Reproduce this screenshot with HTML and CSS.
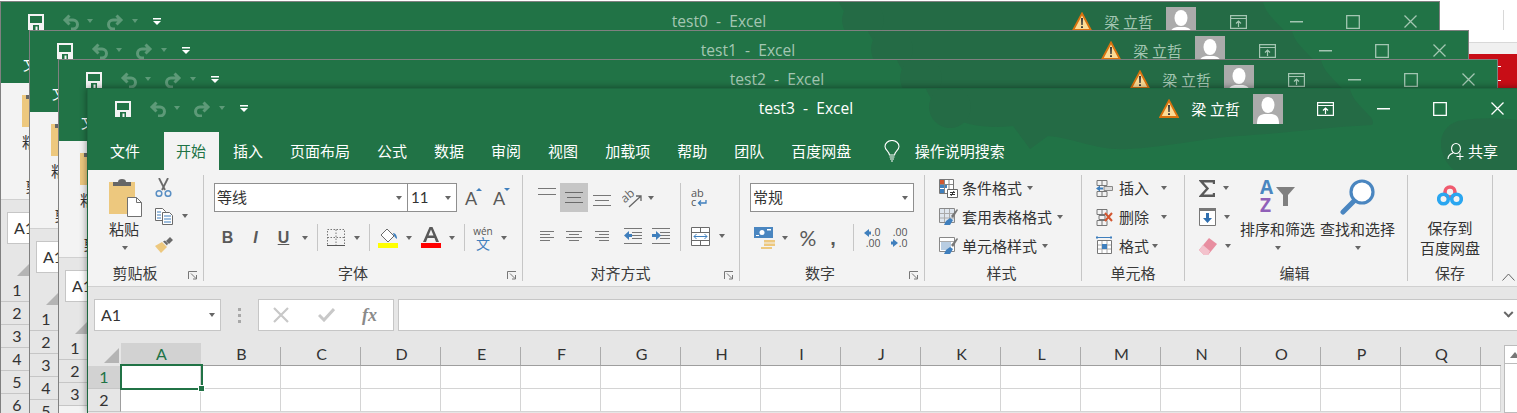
FILE: index.html
```html
<!DOCTYPE html>
<html lang="zh-CN">
<head>
<meta charset="utf-8">
<title>Excel</title>
<link rel="stylesheet" href="styles.css">
</head>
<body>
<svg class="defs" aria-hidden="true">
  <symbol id="cloud" viewBox="0 0 1438 81" preserveAspectRatio="none">
    <path d="M838 0L1262 0C1266 18 1290 28 1284 36C1240 38 1200 44 1150 47C1110 50 1080 58 1040 60C1010 62 990 50 960 47L942 60L925 37C880 42 850 28 838 0Z"/>
    <path d="M1366 81C1350 68 1346 40 1370 32C1400 27 1420 30 1438 32L1438 81Z"/>
    <circle cx="862" cy="18" r="21"/>
  </symbol>
  <symbol id="save" viewBox="0 0 16 16"><path fill="#f4f4f4" d="M0 0h16v16H0z"/><path fill="#217346" d="M2 2h12v7H2zM5 11h6v5H9.5v-3.5h-2V16H5z"/></symbol>
  <symbol id="undo" viewBox="0 0 18 16"><path fill="none" stroke="currentColor" stroke-width="3" d="M3 6h8a4.500 4.500 0 0 1 0 9H9M7.500 1.500L3 6l4.500 4.500"/></symbol>
  <symbol id="custom" viewBox="0 0 8 7"><path fill="#fff" d="M0 0h8v1.500H0zM0 3h8L4 7z"/></symbol>
  <symbol id="warn" viewBox="0 0 20 19"><path fill="#fbdc96" stroke="#d9730f" stroke-width="1.800" d="M10 1.500L18.800 18H1.200z"/><path fill="#3a3a3a" d="M9 6h2l-.3 7H9.300zM9 14.200h2V16H9z"/></symbol>
  <symbol id="avatar" viewBox="0 0 30 30"><path fill="#ababab" d="M0 0h30v30H0z"/><ellipse cx="15" cy="11" rx="6.500" ry="8" fill="#fff"/><path fill="#fff" d="M4 30c0-7 2-9 7-10h8c5 1 7 3 7 10z"/></symbol>
  <symbol id="display" viewBox="0 0 17 14"><path fill="none" stroke="currentColor" stroke-width="1.200" d="M.6.600h15.800v12.800H.6zM1 3.500h15M8.500 12V6M6 8.500l2.500-2.500L11 8.500"/></symbol>
  <symbol id="min" viewBox="0 0 13 2"><path fill="currentColor" d="M0 0h13v1.500H0z"/></symbol>
  <symbol id="max" viewBox="0 0 14 14"><path fill="none" stroke="currentColor" stroke-width="1.300" d="M.7.700h12.600v12.600H.7z"/></symbol>
  <symbol id="close" viewBox="0 0 13 13"><path fill="none" stroke="currentColor" stroke-width="1.300" d="M.5.500l12 12M12.500.500l-12 12"/></symbol>
  <symbol id="bulb" viewBox="0 0 16 22"><path fill="none" stroke="#fff" stroke-width="1.100" d="M5.500 15C5 11 1 10 1 6.500a7 6 0 0 1 14 0C15 10 11 11 10.500 15zM5.500 17h5M6 19h4M7 21h2"/></symbol>
  <symbol id="share" viewBox="0 0 18 18"><path fill="none" stroke="#fff" stroke-width="1.100" d="M9 1.500a4 4.500 0 0 1 0 10a4 4.500 0 0 1 0-10zM1 17c0-3 2-5 5-6M13 11v7M9.500 14.500h7"/></symbol>
  <symbol id="paste" viewBox="0 0 34 38"><path fill="#edc87e" d="M1 3h26v32H1z"/><path fill="#666" d="M5 3h5a4 3 0 0 1 8 0h5v4H5z"/><path fill="#fff" stroke="#707070" d="M19.500 18.500h9l5 5v14h-14z"/><path fill="none" stroke="#707070" d="M28.500 18.500v5h5"/></symbol>
  <symbol id="cut" viewBox="0 0 17 19"><path fill="none" stroke="#6a6a6a" stroke-width="1.800" d="M4 0l6 12M13 0L7 12"/><circle cx="4" cy="15.500" r="2.800" fill="none" stroke="#5a8fc3" stroke-width="1.500"/><circle cx="13" cy="15.500" r="2.800" fill="none" stroke="#5a8fc3" stroke-width="1.500"/></symbol>
  <symbol id="copy" viewBox="0 0 18 17"><path fill="#fff" stroke="#6a6a6a" d="M.5.500h7l3 3v9H.5z"/><path fill="#fff" stroke="#6a6a6a" d="M7.500 4.500h7l3 3v9h-10z"/><path stroke="#3f7fbd" d="M2 4h4M2 7h4M2 10h4M9 8h7M9 11h7M9 14h7"/></symbol>
  <symbol id="painter" viewBox="0 0 18 16"><path fill="#edc87e" d="M0 9l7-4 5 5-6 6z"/><path fill="#6a6a6a" d="M8 4.500l2-1 3 3-1 2zM11 4l4-4 3 3-4 4z"/></symbol>
  <symbol id="borders" viewBox="0 0 18 17"><path fill="none" stroke="#777" stroke-dasharray="1.500 1.500" d="M.5.500h17v16H.5zM.5 8.500h17M9 .500v16"/><path stroke="#555" d="M0 16.500h18"/></symbol>
  <symbol id="bucket" viewBox="0 0 20 20"><path fill="#fff" stroke="#6a6a6a" d="M9 1l7 7-6 6-7-7z"/><path fill="#3f7fbd" d="M15 5c2 0 4 2 4 6-2-1-3-3-4-6z"/><path fill="#ff0" d="M0 15h20v5H0z"/></symbol>
  <symbol id="fontcolor" viewBox="0 0 20 22"><path fill="#595959" d="M8.500 0h3L18 15h-3l-1.500-4h-7L5 15H2zM7.500 8.500h5L10 2.500z"/><path fill="#f00" d="M0 16h20v5H0z"/></symbol>
  <symbol id="atop" viewBox="0 0 18 8"><path stroke="#777" d="M0 .500h18M0 6.500h18"/></symbol>
  <symbol id="amid" viewBox="0 0 18 11"><path stroke="#6a6a6a" d="M0 .500h18M2 5.500h14M0 10.500h18"/></symbol>
  <symbol id="abot" viewBox="0 0 18 12"><path stroke="#777" d="M0 .500h18M2 5.500h14M0 10.500h18"/></symbol>
  <symbol id="aleft" viewBox="0 0 14 11"><path stroke="#777" d="M0 .500h14M0 3.500h10M0 6.500h14M0 9.500h10"/></symbol>
  <symbol id="acenter" viewBox="0 0 16 11"><path stroke="#777" d="M0 .500h16M3 3.500h10M0 6.500h16M3 9.500h10"/></symbol>
  <symbol id="aright" viewBox="0 0 14 11"><path stroke="#777" d="M0 .500h14M4 3.500h10M0 6.500h14M4 9.500h10"/></symbol>
  <symbol id="indl" viewBox="0 0 18 16"><path stroke="#777" d="M0 .500h18M8 4.500h10M8 7.500h10M8 10.500h10M0 15.500h18"/><path fill="#3f7fbd" d="M0 7.500L5 3v3h3v3H5v3z"/></symbol>
  <symbol id="indr" viewBox="0 0 18 16"><path stroke="#777" d="M0 .500h18M8 4.500h10M8 7.500h10M8 10.500h10M0 15.500h18"/><path fill="#3f7fbd" d="M9 7.500L4 3v3H0v3h4v3z"/></symbol>
  <symbol id="merge" viewBox="0 0 19 19"><path fill="#fff" stroke="#6a6a6a" d="M.5.500h18v18H.5zM.5 5.500h18M.5 13.500h18M9.500.500v5M9.500 13.500v5"/><path fill="none" stroke="#3f7fbd" d="M3 9.500h13M5.500 7L3 9.500 5.500 12M13.500 7l2.500 2.500-2.500 2.500"/></symbol>
  <symbol id="acct" viewBox="0 0 21 22"><path fill="#4a86c0" d="M0 0h19v11H0z"/><circle cx="8" cy="5.500" r="2.500" fill="#fff"/><path fill="#fff" d="M13 2h4v1.500h-4zM2 8h3v1H2z"/><path fill="#edc87e" d="M10 13h11v2.500H10zM10 16.500h11V19H10zM7 20h11v2H7z"/></symbol>
  <symbol id="decl" viewBox="0 0 16 18"><path fill="#3f7fbd" d="M0 4l5-4v2.500h2v3H5V8z"/></symbol>
  <symbol id="decr" viewBox="0 0 16 18"><path fill="#3f7fbd" d="M7 14l-5-4v2.500H0v3h2V18z"/></symbol>
  <symbol id="cond" viewBox="0 0 19 19"><path fill="#fff" stroke="#777" d="M.5.500h14v14H.5z"/><path fill="#d2562f" d="M1 1h4v4H1z"/><path fill="#3f7fbd" d="M1 6h7v3H1zM1 10h4v4H1z"/><path stroke="#888" d="M5.500 1v13M10 1v13M1 5.500h13"/><path fill="#fff" stroke="#666" d="M8.500 10.500h10v8h-10z"/><path stroke="#333" d="M11 13.500h5M11 15.500h5M12 17l3-5"/></symbol>
  <symbol id="tablef" viewBox="0 0 19 19"><path fill="#dfe6ee" stroke="#888" d="M.5.500h15v14H.5z"/><path stroke="#aaa" d="M5.500 1v13M10.500 1v13M1 5.500h14M1 10h14"/><path fill="#777" d="M12 8l6-7 1 1-5 8z"/><path fill="#3f7fbd" d="M7 13l4-3 3 2-3 5H5z"/></symbol>
  <symbol id="cellf" viewBox="0 0 19 19"><path fill="#fff" stroke="#888" d="M.5.500h15v14H.5z"/><path fill="#b8cde2" d="M2 5h10v8H2z"/><path stroke="#aaa" d="M1 4.500h14"/><path fill="#777" d="M12 8l6-7 1 1-5 8z"/><path fill="#3f7fbd" d="M7 13l4-3 3 2-3 5H5z"/></symbol>
  <symbol id="cins" viewBox="0 0 17 17"><path fill="none" stroke="#777" d="M1 .500h10v5H1zM1 11.500h10v5H1zM6 .500v5M6 11.500v5"/><path fill="#dcdcdc" stroke="#888" d="M8 6.500h8.500v4H8z"/><path fill="#3f7fbd" d="M0 8.500L4 5.500v2h3v2H4v2z"/></symbol>
  <symbol id="cdel" viewBox="0 0 17 17"><path fill="none" stroke="#777" d="M1 .500h10v5H1zM1 11.500h10v5H1zM6 .500v5M6 11.500v5M3 6.500h6v4H3z"/><path fill="none" stroke="#d2562f" stroke-width="2" d="M9 4l7 8M16 4l-7 8"/></symbol>
  <symbol id="cfmt" viewBox="0 0 17 20"><path fill="none" stroke="#3f7fbd" d="M0 1.500h16M1 0v3M15 0v3"/><path fill="#fff" stroke="#777" d="M1.500 4.500h14v13h-14z"/><path stroke="#aaa" d="M6 5v12M11 5v12M2 9h13M2 13h13"/><path fill="#3f7fbd" d="M6 8h5v5H6z"/></symbol>
  <symbol id="sigma" viewBox="0 0 16 17"><path fill="none" stroke="#595959" stroke-width="2.400" d="M15 4V1.200H2L8.500 8.500 2 15.800h13V13"/></symbol>
  <symbol id="fill" viewBox="0 0 17 18"><path fill="#fff" stroke="#777" d="M.5.500h16v17H.5z"/><path fill="#777" d="M0 0h17v3H0z"/><path fill="#2f6fb0" d="M7 5h3v5h3l-4.500 5L4 10h3z"/></symbol>
  <symbol id="eraser" viewBox="0 0 18 17"><path fill="#e88ea0" d="M10 0l8 6-9 11H5L0 12z"/><path fill="#f3c2cc" d="M0 12l4-5 7 6-2 4H5z"/></symbol>
  <symbol id="find" viewBox="0 0 36 38"><circle cx="22" cy="13" r="11" fill="#fff" stroke="#4a86c0" stroke-width="3.200"/><path stroke="#4a86c0" stroke-width="5" stroke-linecap="round" d="M14 22L3 33"/></symbol>
  <symbol id="baidu" viewBox="0 0 26 22"><circle cx="13" cy="7" r="5" fill="none" stroke="#f05a6e" stroke-width="3.600"/><circle cx="6.500" cy="14" r="4.800" fill="none" stroke="#2aa6f0" stroke-width="3.600"/><circle cx="19.500" cy="14" r="4.800" fill="none" stroke="#2aa6f0" stroke-width="3.600"/></symbol>
  <symbol id="launch" viewBox="0 0 10 9"><path fill="none" stroke="#777" d="M.5 8V.500H9M3 2.500l5 5M8.500 4v4H5"/></symbol>
  <symbol id="collapse" viewBox="0 0 13 8"><path fill="none" stroke="#666" d="M.5 7.500L6.500 1l6 6.500"/></symbol>
  <symbol id="fxx" viewBox="0 0 16 16"><path fill="none" stroke="#c8c8c8" stroke-width="2.200" d="M1 1l14 14M15 1L1 15"/></symbol>
  <symbol id="fxok" viewBox="0 0 17 14"><path fill="none" stroke="#c8c8c8" stroke-width="3" d="M1 7l5 5L16 1"/></symbol>
</svg>

<div class="desk-line"></div>
<div class="desk-strip"></div>
<div class="desk-red"><i></i><i></i></div>

<section class="win w0 back">
  <header class="head">
    <svg class="cloud"><use href="#cloud"/></svg>
    <div class="titlebar">
      <div class="qat"><svg width="16" height="16"><use href="#save"/></svg><svg class="dim" width="18" height="16"><use href="#undo"/></svg><span class="caret dimc"></span><svg class="dim flip" width="18" height="16"><use href="#undo"/></svg><span class="caret dimc"></span><svg width="8" height="7"><use href="#custom"/></svg></div>
      <div class="title">test0&nbsp; -&nbsp; Excel</div>
      <div class="ctrls"><svg width="20" height="19"><use href="#warn"/></svg><span class="user">梁 立哲</span><svg class="av" width="30" height="30"><use href="#avatar"/></svg><svg class="c-disp" width="17" height="14"><use href="#display"/></svg><svg class="c-min" width="13" height="2"><use href="#min"/></svg><svg class="c-max" width="14" height="14"><use href="#max"/></svg><svg class="c-close" width="13" height="13"><use href="#close"/></svg></div>
    </div>
    <nav class="tabs"><span class="tab">文件</span></nav>
  </header>
  <div class="ribbon"><div class="group g-clip"><div class="big paste-col"><svg width="34" height="38"><use href="#paste"/></svg><span class="big-t">粘贴</span><span class="caret"></span></div><div class="group-label">剪贴板</div></div></div>
  <div class="fbar"><div class="namebox"><span>A1</span></div></div>
  <div class="rows"><div class="corner"></div><div class="rh">1</div><div class="rh">2</div><div class="rh">3</div><div class="rh">4</div><div class="rh">5</div><div class="rh">6</div></div>
</section>

<section class="win w1 back">
  <header class="head">
    <svg class="cloud"><use href="#cloud"/></svg>
    <div class="titlebar">
      <div class="qat"><svg width="16" height="16"><use href="#save"/></svg><svg class="dim" width="18" height="16"><use href="#undo"/></svg><span class="caret dimc"></span><svg class="dim flip" width="18" height="16"><use href="#undo"/></svg><span class="caret dimc"></span><svg width="8" height="7"><use href="#custom"/></svg></div>
      <div class="title">test1&nbsp; -&nbsp; Excel</div>
      <div class="ctrls"><svg width="20" height="19"><use href="#warn"/></svg><span class="user">梁 立哲</span><svg class="av" width="30" height="30"><use href="#avatar"/></svg><svg class="c-disp" width="17" height="14"><use href="#display"/></svg><svg class="c-min" width="13" height="2"><use href="#min"/></svg><svg class="c-max" width="14" height="14"><use href="#max"/></svg><svg class="c-close" width="13" height="13"><use href="#close"/></svg></div>
    </div>
    <nav class="tabs"><span class="tab">文件</span></nav>
  </header>
  <div class="ribbon"><div class="group g-clip"><div class="big paste-col"><svg width="34" height="38"><use href="#paste"/></svg><span class="big-t">粘贴</span><span class="caret"></span></div><div class="group-label">剪贴板</div></div></div>
  <div class="fbar"><div class="namebox"><span>A1</span></div></div>
  <div class="rows"><div class="corner"></div><div class="rh">1</div><div class="rh">2</div><div class="rh">3</div><div class="rh">4</div><div class="rh">5</div></div>
</section>

<section class="win w2 back">
  <header class="head">
    <svg class="cloud"><use href="#cloud"/></svg>
    <div class="titlebar">
      <div class="qat"><svg width="16" height="16"><use href="#save"/></svg><svg class="dim" width="18" height="16"><use href="#undo"/></svg><span class="caret dimc"></span><svg class="dim flip" width="18" height="16"><use href="#undo"/></svg><span class="caret dimc"></span><svg width="8" height="7"><use href="#custom"/></svg></div>
      <div class="title">test2&nbsp; -&nbsp; Excel</div>
      <div class="ctrls"><svg width="20" height="19"><use href="#warn"/></svg><span class="user">梁 立哲</span><svg class="av" width="30" height="30"><use href="#avatar"/></svg><svg class="c-disp" width="17" height="14"><use href="#display"/></svg><svg class="c-min" width="13" height="2"><use href="#min"/></svg><svg class="c-max" width="14" height="14"><use href="#max"/></svg><svg class="c-close" width="13" height="13"><use href="#close"/></svg></div>
    </div>
    <nav class="tabs"><span class="tab">文件</span></nav>
  </header>
  <div class="ribbon"><div class="group g-clip"><div class="big paste-col"><svg width="34" height="38"><use href="#paste"/></svg><span class="big-t">粘贴</span><span class="caret"></span></div><div class="group-label">剪贴板</div></div></div>
  <div class="fbar"><div class="namebox"><span>A1</span></div></div>
  <div class="rows"><div class="corner"></div><div class="rh">1</div><div class="rh">2</div><div class="rh">3</div></div>
</section>

<section class="win w3">
  <header class="head">
    <svg class="cloud"><use href="#cloud"/></svg>
    <div class="titlebar">
      <div class="qat"><svg width="16" height="16"><use href="#save"/></svg><svg class="dim" width="18" height="16"><use href="#undo"/></svg><span class="caret dimc"></span><svg class="dim flip" width="18" height="16"><use href="#undo"/></svg><span class="caret dimc"></span><svg width="8" height="7"><use href="#custom"/></svg></div>
      <div class="title">test3&nbsp; -&nbsp; Excel</div>
      <div class="ctrls"><svg width="20" height="19"><use href="#warn"/></svg><span class="user">梁 立哲</span><svg class="av" width="30" height="30"><use href="#avatar"/></svg><svg class="c-disp" width="17" height="14"><use href="#display"/></svg><svg class="c-min" width="13" height="2"><use href="#min"/></svg><svg class="c-max" width="14" height="14"><use href="#max"/></svg><svg class="c-close" width="13" height="13"><use href="#close"/></svg></div>
    </div>
    <nav class="tabs">
      <span class="tab">文件</span><span class="tab on">开始</span><span class="tab">插入</span><span class="tab">页面布局</span><span class="tab">公式</span><span class="tab">数据</span><span class="tab">审阅</span><span class="tab">视图</span><span class="tab">加载项</span><span class="tab">帮助</span><span class="tab">团队</span><span class="tab">百度网盘</span>
      <span class="search"><svg width="16" height="22"><use href="#bulb"/></svg><span>操作说明搜索</span></span>
      <span class="sharebtn"><svg width="18" height="18"><use href="#share"/></svg><span>共享</span></span>
    </nav>
  </header>

  <div class="ribbon">
    <div class="group g-clip">
      <div class="body clip-body">
        <div class="big paste-col"><svg width="34" height="38"><use href="#paste"/></svg><span class="big-t">粘贴</span><span class="caret"></span></div>
        <div class="clip-side">
          <svg width="17" height="19"><use href="#cut"/></svg>
          <div class="copy-row"><svg width="18" height="17"><use href="#copy"/></svg><span class="caret"></span></div>
          <svg width="18" height="16"><use href="#painter"/></svg>
        </div>
      </div>
      <div class="group-label">剪贴板</div>
      <svg class="launch" width="10" height="9"><use href="#launch"/></svg>
    </div>

    <div class="group g-font">
      <div class="body">
        <div class="font-r1">
          <div class="combo fontname"><span>等线</span><span class="caret"></span></div>
          <div class="combo fontsize"><span>11</span><span class="caret"></span></div>
          <span class="growa up">A</span><span class="growa down">A</span>
        </div>
        <div class="font-r2">
          <b class="fb">B</b><i class="fi">I</i><u class="fu">U</u><span class="caret"></span><span class="vsep"></span>
          <svg width="18" height="17"><use href="#borders"/></svg><span class="caret"></span><span class="vsep"></span>
          <svg width="20" height="20"><use href="#bucket"/></svg><span class="caret"></span>
          <svg width="20" height="22"><use href="#fontcolor"/></svg><span class="caret"></span><span class="vsep"></span>
          <span class="wen"><span>wén</span><span class="wenz">文</span></span><span class="caret"></span>
        </div>
      </div>
      <div class="group-label">字体</div>
      <svg class="launch" width="10" height="9"><use href="#launch"/></svg>
    </div>

    <div class="group g-align">
      <div class="body align-body">
        <div class="al-main">
          <div class="al-r1">
            <svg class="atop" width="18" height="8"><use href="#atop"/></svg>
            <span class="sel"><svg width="18" height="11"><use href="#amid"/></svg></span>
            <svg class="abot" width="18" height="12"><use href="#abot"/></svg>
            <svg width="20" height="20" viewBox="0 0 20 20"><text x="0" y="12" transform="rotate(-40 6 10)" class="svgt" fill="#666">ab</text><path fill="none" stroke="#666" stroke-width="1.300" d="M7 19L19 8M14 8h5v5"/></svg>
            <span class="caret"></span>
          </div>
          <div class="al-r2">
            <svg width="14" height="11"><use href="#aleft"/></svg>
            <svg width="16" height="11"><use href="#acenter"/></svg>
            <svg width="14" height="11"><use href="#aright"/></svg>
            <svg width="18" height="16"><use href="#indl"/></svg>
            <svg width="18" height="16"><use href="#indr"/></svg>
          </div>
        </div>
        <span class="al-sep"></span>
        <div class="al-side">
          <svg class="wrap" width="16" height="18" viewBox="0 0 16 18"><text x="0" y="8" class="svgw" fill="#555">ab</text><text x="0" y="17" class="svgw" fill="#555">c</text><path fill="none" stroke="#3f7fbd" stroke-width="1.300" d="M15 11v3H8M10 11.500L7.500 14l2.500 2.500"/></svg>
          <svg class="merge" width="19" height="19"><use href="#merge"/></svg><span class="caret"></span>
        </div>
      </div>
      <div class="group-label">对齐方式</div>
      <svg class="launch" width="10" height="9"><use href="#launch"/></svg>
    </div>

    <div class="group g-num">
      <div class="body num-body">
        <div class="combo numfmt"><span>常规</span><span class="caret"></span></div>
        <div class="num-r2">
          <svg width="21" height="22"><use href="#acct"/></svg><span class="caret"></span>
          <span class="pct">%</span><span class="comma">,</span><span class="vsep"></span>
          <span class="dec"><svg width="16" height="18"><use href="#decl"/></svg><span class="d1">.0</span><span class="d2">.00</span></span>
          <span class="dec"><svg width="16" height="18"><use href="#decr"/></svg><span class="d1">.00</span><span class="d2">.0</span></span>
        </div>
      </div>
      <div class="group-label">数字</div>
      <svg class="launch" width="10" height="9"><use href="#launch"/></svg>
    </div>

    <div class="group g-styles">
      <div class="body stack">
        <div class="row"><svg width="19" height="19"><use href="#cond"/></svg><span>条件格式</span><span class="caret"></span></div>
        <div class="row"><svg width="19" height="19"><use href="#tablef"/></svg><span>套用表格格式</span><span class="caret"></span></div>
        <div class="row"><svg width="19" height="19"><use href="#cellf"/></svg><span>单元格样式</span><span class="caret"></span></div>
      </div>
      <div class="group-label">样式</div>
    </div>

    <div class="group g-cells">
      <div class="body stack">
        <div class="row"><svg width="17" height="17"><use href="#cins"/></svg><span>插入</span><span class="caret far"></span></div>
        <div class="row"><svg width="17" height="17"><use href="#cdel"/></svg><span>删除</span><span class="caret far"></span></div>
        <div class="row"><svg width="17" height="20"><use href="#cfmt"/></svg><span>格式</span><span class="caret"></span></div>
      </div>
      <div class="group-label">单元格</div>
    </div>

    <div class="group g-edit">
      <div class="body edit-body">
        <div class="stack edit-col">
          <div class="row"><svg width="16" height="17"><use href="#sigma"/></svg><span class="caret"></span></div>
          <div class="row"><svg width="17" height="18"><use href="#fill"/></svg><span class="caret"></span></div>
          <div class="row"><svg width="18" height="17"><use href="#eraser"/></svg><span class="caret"></span></div>
        </div>
        <div class="big"><svg width="36" height="38" viewBox="0 0 36 38"><text x="0" y="15" class="svgb" fill="#4a86c0">A</text><text x="0" y="33" class="svgb" fill="#9060b8">Z</text><path fill="#7f7f7f" d="M16 8h19l-7 8v11h-5V16z"/></svg><span class="big-t">排序和筛选</span><span class="caret"></span></div>
        <div class="big"><svg width="36" height="38"><use href="#find"/></svg><span class="big-t">查找和选择</span><span class="caret"></span></div>
      </div>
      <div class="group-label">编辑</div>
    </div>

    <div class="group g-save">
      <div class="body save-body"><svg width="26" height="22"><use href="#baidu"/></svg><span class="save-t">保存到<br>百度网盘</span></div>
      <div class="group-label">保存</div>
    </div>
    <svg class="collapse" width="13" height="8"><use href="#collapse"/></svg>
  </div>

  <div class="fbar">
    <div class="namebox"><span>A1</span><span class="caret"></span></div>
    <div class="dots"><i></i><i></i><i></i></div>
    <div class="fxbox"><svg width="16" height="16"><use href="#fxx"/></svg><svg width="17" height="14"><use href="#fxok"/></svg><span class="fx">fx</span></div>
    <div class="finput"><span class="fchev"></span></div>
  </div>

  <div class="sheet">
    <div class="grid">
      <div class="corner"></div>
      <div class="ch on">A</div><div class="ch">B</div><div class="ch">C</div><div class="ch">D</div><div class="ch">E</div><div class="ch">F</div><div class="ch">G</div><div class="ch">H</div><div class="ch">I</div><div class="ch">J</div><div class="ch">K</div><div class="ch">L</div><div class="ch">M</div><div class="ch">N</div><div class="ch">O</div><div class="ch">P</div><div class="ch">Q</div><div class="ch last"></div>
      <div class="rh on">1</div>
      <div class="cell"></div><div class="cell"></div><div class="cell"></div><div class="cell"></div><div class="cell"></div><div class="cell"></div><div class="cell"></div><div class="cell"></div><div class="cell"></div><div class="cell"></div><div class="cell"></div><div class="cell"></div><div class="cell"></div><div class="cell"></div><div class="cell"></div><div class="cell"></div><div class="cell"></div><div class="cell"></div>
      <div class="rh">2</div>
      <div class="cell"></div><div class="cell"></div><div class="cell"></div><div class="cell"></div><div class="cell"></div><div class="cell"></div><div class="cell"></div><div class="cell"></div><div class="cell"></div><div class="cell"></div><div class="cell"></div><div class="cell"></div><div class="cell"></div><div class="cell"></div><div class="cell"></div><div class="cell"></div><div class="cell"></div><div class="cell"></div>
      <div class="selbox"></div>
    </div>
    <div class="vscroll"><span class="vup"></span></div>
  </div>
</section>
</body>
</html>
```
FILE: styles.css
```css
* { box-sizing: border-box; }
html, body { margin: 0; height: 413px; overflow: hidden; background: #fff; }
body { position: relative; width: 1517px; font: 15px/20px Lato, "Noto Sans CJK SC", sans-serif; color: #333; }
svg { display: block; flex: none; }
.defs { position: absolute; width: 0; height: 0; }
.svgt { font: 12px "Open Sans", sans-serif; }
.svgw { font: 11px "Open Sans", sans-serif; }
.svgb { font: bold 19px "Open Sans", sans-serif; }

/* desktop behind the windows */
.desk-line { position: absolute; left: 1503px; top: 10px; width: 1px; height: 20px; background: #d8d8d8; }
.desk-strip { position: absolute; left: 1440px; top: 42px; width: 77px; height: 13px; background: #f0f0f0; border-top: 1px solid #d8d8d8; }
.desk-red { position: absolute; left: 1468px; top: 54px; width: 49px; height: 40px; background: #c80d16; padding: 12px 0 0 30px; }
.desk-red i { display: block; width: 3px; height: 1px; background: #fff; margin-bottom: 13px; }

/* windows */
.win { position: absolute; width: 1440px; background: #f3f3f3; border: 1px solid #808080; border-bottom: 0; overflow: hidden; }
.w0 { left: 0; top: 1px; height: 412px; }
.w1 { left: 29px; top: 30px; height: 383px; }
.w2 { left: 58px; top: 59px; height: 354px; }
.w3 { left: 87px; top: 88px; height: 325px; border-color: #1d6840; box-shadow: 0 0 7px rgba(0, 0, 0, .45); }

.head { position: relative; height: 81px; background: #217346; color: #fff; }
.cloud { position: absolute; inset: 0; width: 100%; height: 100%; fill: #246b45; }
.titlebar { position: relative; height: 39px; margin-bottom: 4px; display: grid; grid-template-columns: 1fr auto 1fr; align-items: center; }
.qat { display: grid; grid-template-columns: 34px 25px 19px 26px 21px auto; justify-content: start; align-items: center; padding: 0 0 0 27px; }
.dim { color: #5d9a78; }
.flip { transform: scaleX(-1); }
.caret { width: 0; height: 0; border: 3.5px solid transparent; border-top: 4px solid #666; border-bottom: 0; display: block; flex: none; }
.dimc { border-top-color: #5d9a78; margin-top: -2px; }
.title { margin-right: 2px; padding-bottom: 2px; font: 15.6px/20px "Open Sans", sans-serif; color: #fff; }
.ctrls { display: flex; justify-content: flex-end; align-items: center; padding-right: 22px; }
.user { margin: 0 13px 0 12px; white-space: nowrap; }
.c-disp { margin-left: 34px; }
.c-min { margin-left: 43px; }
.c-max { margin-left: 43px; }
.c-close { margin-left: 44px; }
.back .title, .back .user, .back .c-disp, .back .c-min, .back .c-max, .back .c-close { color: #a3c6b2; }

.tabs { position: relative; height: 38px; display: flex; align-items: stretch; padding-left: 8.5px; }
.tab { padding: 0 12.5px; margin: 0 1px; display: flex; align-items: center; white-space: nowrap; }
.tab:first-child { margin-right: 10px; }
.tab.on { background: #f3f3f3; color: #217346; }
.search { display: flex; align-items: center; gap: 15px; margin-left: 19px; }
.sharebtn { display: flex; align-items: center; gap: 3px; position: absolute; right: 28px; top: 0; bottom: 0; }

/* ribbon */
.ribbon { position: relative; display: flex; height: 117px; padding-top: 5px; background: #f3f3f3; border-bottom: 1px solid #d0d0d0; }
.group { position: relative; height: 106px; border-right: 1px solid #c6c6c6; flex: none; }
.body { height: 90px; }
.group-label { text-align: center; line-height: 16px; height: 16px; color: #3a3a3a; white-space: nowrap; }
.launch { position: absolute; right: 5px; bottom: 1px; }
.g-clip { width: 116px; }
.g-font { width: 319px; }
.g-align { width: 217px; }
.g-num { width: 185px; }
.g-styles { width: 157px; }
.g-cells { width: 103px; }
.g-edit { width: 223px; }
.g-save { width: 85px; }
.g-clip .group-label { margin-right: 21px; }
.g-font .group-label { margin-right: 20px; }
.g-align .group-label { margin-right: 21px; }
.g-num .group-label { margin-right: 24px; }
.g-styles .group-label, .g-edit .group-label { margin-right: 3px; }
.collapse { position: absolute; right: 11px; bottom: 5px; }

.big { display: flex; flex-direction: column; align-items: center; width: 75px; padding-top: 4px; }
.big-t { margin-top: 2px; white-space: nowrap; }
.big .caret { margin-top: 7px; }
.paste-col { width: 34px; margin-left: 20px; height: 90px; }
.paste-col .big-t { margin-right: 2px; }
.clip-body { display: flex; }
.clip-side { display: grid; grid-auto-rows: 29.5px; justify-items: start; padding: 3px 0 0 13px; }
.copy-row { display: flex; align-items: center; gap: 9px; height: 17px; }

.combo { display: flex; align-items: center; justify-content: space-between; height: 29px; background: #fff; border: 1px solid #8f8f8f; padding: 0 5px 0 2px; }
.combo span:first-child { line-height: 27px; }

.font-r1 { display: flex; align-items: center; padding: 8px 0 0 10px; }
.fontname { width: 194px; }
.fontsize { width: 50px; margin-left: -1px; padding-left: 3px; }
.growa { position: relative; width: 28px; text-align: center; font-size: 18px; color: #595959; }
.growa::after { content: ""; position: absolute; right: 3px; top: 0; border: 3px solid transparent; }
.growa.up::after { border-bottom: 3px solid #3f7fbd; border-top: 0; }
.growa.down::after { border-top: 3px solid #3f7fbd; border-bottom: 0; }

.font-r2 { display: grid; grid-template-columns: 27px 29px 27px 16px 8px 30px 12px 12px 26px 16px 28px 14px 10px 28px 14px; justify-items: center; align-items: center; height: 27px; margin: 12px 0 0 10px; }
.fb, .fi, .fu { font: 16px "Liberation Sans", sans-serif; color: #595959; }
.fb { font-weight: bold; }
.fi { font-weight: bold; font-style: italic; }
.fu { font-weight: bold; }
.vsep { width: 1px; height: 27px; background: #c6c6c6; }
.wen { display: flex; flex-direction: column; align-items: center; font: 10px/10px "Open Sans", sans-serif; color: #555; }
.wenz { font: 14px/14px "Noto Sans CJK SC", sans-serif; color: #3f7fbd; }

.align-body { display: flex; padding: 8px 0 0 10px; }
.al-main { width: 139px; }
.al-r1 { display: grid; grid-template-columns: 27px 28px 28px 32px 24px; justify-items: center; align-items: center; height: 29px; }
.al-r1 > .caret { justify-self: start; }
.atop { align-self: start; margin-top: 5px; }
.abot { align-self: end; margin-bottom: 5px; }
.sel { display: flex; align-items: center; justify-content: center; width: 28px; height: 29px; background: #c6c6c6; }
.al-r2 { display: grid; grid-template-columns: 27px 28px 28px 34px 22px; justify-items: center; align-items: center; height: 24px; margin-top: 12px; }
.al-sep { width: 1px; height: 68px; margin: 0 8px; background: #c6c6c6; }
.al-side { display: grid; grid-template-columns: 22px 22px; grid-template-rows: 29px 24px; row-gap: 12px; justify-items: center; align-items: center; }
.wrap { grid-column: 1 / 3; justify-self: start; margin-left: 2px; }

.num-body { padding: 8px 0 0 10px; }
.numfmt { width: 164px; }
.num-r2 { display: grid; grid-template-columns: 29px 12px 34px 16px 24px 14px 40px; justify-items: center; align-items: center; height: 27px; margin-top: 12px; }
.pct { font-size: 21px; color: #595959; }
.comma { font: bold 20px/20px "Liberation Sans", sans-serif; color: #595959; }
.dec { position: relative; display: block; width: 17px; height: 22px; font: 10.500px/11px "Open Sans", sans-serif; color: #555; }
.dec svg { position: absolute; left: 0; top: 2px; }
.d1, .d2 { position: absolute; right: 0; }
.d1 { top: 0; }
.d2 { top: 11px; }

.stack { display: flex; flex-direction: column; gap: 3px; }
.row { display: flex; align-items: center; height: 26px; padding-left: 14px; white-space: nowrap; }
.row > span:first-of-type:not(.caret) { margin-left: 4px; }
.row > .caret { margin-left: 5px; }
.g-cells .row > span:first-of-type { margin-left: 6px; }
.g-cells .row > .caret { margin-left: 3px; }
.g-cells .row > .caret.far { margin-left: 12px; }
.edit-body { display: flex; }
.edit-col { width: 55px; }
.edit-col .row > .caret { margin-left: 8px; }
.g-edit .big + .big { margin-left: 5px; }
.save-body { display: flex; flex-direction: column; align-items: center; padding-top: 10px; }
.save-t { text-align: center; margin-top: 11px; }

/* formula bar */
.fbar { display: flex; align-items: flex-start; height: 56px; padding: 12px 0 0 6px; background: #e6e6e6; }
.namebox { display: flex; align-items: center; justify-content: space-between; width: 127px; height: 32px; padding: 0 5px 0 6px; background: #fff; border: 1px solid #c6c6c6; font-size: 16px; }
.dots { display: flex; flex-direction: column; gap: 3px; width: 37px; align-items: center; padding: 9px 0 0 0; }
.dots i { width: 3px; height: 3px; background: #a8a8a8; }
.fxbox { display: grid; grid-template-columns: 45px 44px 1fr; justify-items: start; align-items: center; width: 136px; height: 32px; padding-left: 14px; background: #fff; border: 1px solid #c6c6c6; }
.fx { font: italic bold 18px "Liberation Serif", serif; color: #8a8a8a; }
.finput { display: flex; justify-content: flex-end; align-items: center; flex: 1; height: 32px; margin-left: 4px; padding-right: 14px; background: #fff; border: 1px solid #c6c6c6; border-right: 0; }
.fchev { width: 7px; height: 7px; border: solid #666; border-width: 0 2.500px 2.500px 0; transform: rotate(45deg) translate(-2px, -2px); }

/* sheet */
.sheet { display: flex; background: #e6e6e6; height: 70px; }
.grid { position: relative; display: grid; grid-template-columns: 33px repeat(17, 80px) 20px; grid-auto-rows: 23px; height: 69px; }
.corner { position: relative; width: 33px; height: 23px; background: #e6e6e6; }
.corner::after { content: ""; position: absolute; right: 2px; bottom: 3px; border-style: solid; border-width: 0 0 15px 15px; border-color: transparent transparent #b4b4b4 transparent; }
.ch { display: flex; align-items: center; justify-content: center; padding-left: 1px; font-size: 16px; color: #333; background: #e6e6e6 linear-gradient(#ababab, #ababab) right bottom / 1px 18px no-repeat; border-bottom: 1px solid #9e9e9e; }
.ch.on { background: #d2d2d2; color: #217346; }
.ch.last { background-image: none; }
.rh { display: flex; align-items: center; justify-content: center; width: 33px; height: 23px; font-size: 16px; color: #333; background: #e6e6e6; border-bottom: 1px solid #c6c6c6; border-right: 1px solid #9e9e9e; }
.rh.on { background: #d2d2d2; color: #217346; }
.cell { background: #fff; border-right: 1px solid #d4d4d4; border-bottom: 1px solid #d4d4d4; }
.cell:nth-child(19n + 1) { border-right: 1px solid #a0a0a0; }
.selbox { position: absolute; left: 32px; top: 21px; width: 83px; height: 26px; border: 2px solid #217346; }
.selbox::after { content: ""; position: absolute; right: -3px; bottom: -3px; width: 5px; height: 5px; background: #217346; outline: 1px solid #fff; }
.rows { display: flex; flex-direction: column; }
.vscroll { width: 22px; height: 68px; margin: 2px 0 0 3px; background: #fff; border: 1px solid #bcbcbc; }
.vup { display: flex; height: 18px; align-items: center; justify-content: center; border-bottom: 1px solid #bcbcbc; }
.vup::after { content: ""; border-style: solid; border-width: 0 5px 6px; border-color: transparent transparent #777 transparent; }
```
